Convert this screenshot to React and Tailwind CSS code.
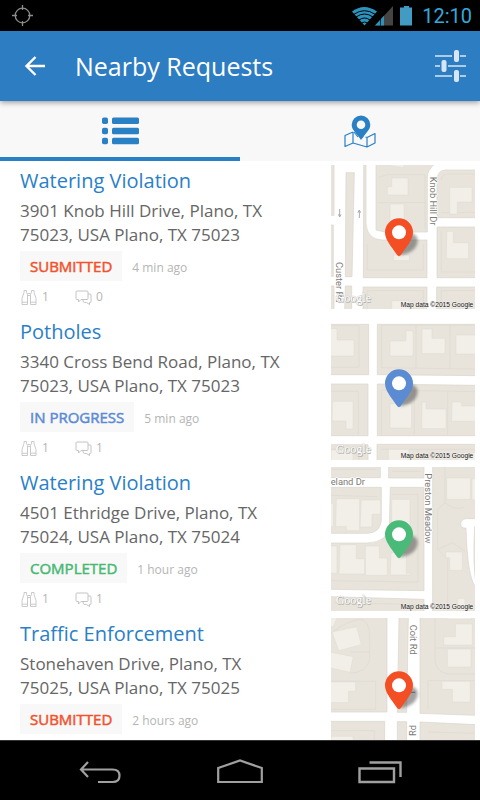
import React from "react";

const requests = [
  { id: 1, title: "Watering Violation", line1: "3901 Knob Hill Drive, Plano, TX", line2: "75023, USA Plano, TX 75023", status: "SUBMITTED", tone: "text-[#f4502a]", pin: "#f44e25", time: "4 min ago", watchers: 1, comments: 0, map: KnobHillMap },
  { id: 2, title: "Potholes", line1: "3340 Cross Bend Road, Plano, TX", line2: "75023, USA Plano, TX 75023", status: "IN PROGRESS", tone: "text-[#5b8bd6]", pin: "#5b8bd2", time: "5 min ago", watchers: 1, comments: 1, map: CrossBendMap },
  { id: 3, title: "Watering Violation", line1: "4501 Ethridge Drive, Plano, TX", line2: "75024, USA Plano, TX 75024", status: "COMPLETED", tone: "text-[#48b975]", pin: "#4aba78", time: "1 hour ago", watchers: 1, comments: 1, map: EthridgeMap },
  { id: 4, title: "Traffic Enforcement", line1: "Stonehaven Drive, Plano, TX", line2: "75025, USA Plano, TX 75025", status: "SUBMITTED", tone: "text-[#f4502a]", pin: "#f44e25", time: "2 hours ago", watchers: 1, comments: 0, map: StonehavenMap },
];

function Blocks({ d }) {
  return <path d={d} fill="#e8e4dc" stroke="#d9d5cb" strokeWidth="2" />;
}
function Lots({ d }) {
  return <path d={d} fill="none" stroke="#dfdbd2" strokeWidth="2.5" />;
}
function Houses({ d }) {
  return <path d={d} fill="#f1efe8" stroke="#dedad1" strokeWidth="1.5" />;
}
function Street({ x, y, vertical, children }) {
  return (
    <text
      transform={vertical ? `translate(${x} ${y}) rotate(90)` : `translate(${x} ${y})`}
      className="fill-[#7d7a76] font-[Roboto,sans-serif] text-[28px]"
      stroke="#fff"
      strokeWidth="4"
      paintOrder="stroke"
    >
      {children}
    </text>
  );
}

function KnobHillMap() {
  return (
    <g transform="translate(-33 -15)">
      <Blocks d="M30 12h12v154H30ZM30 195h10v154H30ZM78 38h25l-7 312H76ZM168 12h176q-22 18-22 40v164H206q-20 0-38-6ZM131 12h7v180q4 46 48 48h135v113H130ZM468 30H375q-22 2-24 28v115h117ZM351 201h117v152H351ZM30 378h12v72H30ZM76 378h19v72H74ZM129 381h192v69H129ZM350 381h118v69H350Z" />
      <Lots d="M175 52l28-8h112v84H172M315 128v80M142 252v78h168v-78M364 60q0-18 20-18h84M364 158h104M364 214v122h104M142 450v-58h168v58M364 450v-58h104" />
      <Houses d="M215 54h49v51h-62V80h13ZM210 132h42v58h-42ZM389 82h67v44h-44v36h-23ZM380 214h20v34h46v48h-67ZM220 285h48v17h-48ZM215 422h52v28h-52ZM202 12h50v11l-46-7Z" />
      <path d="M59 147v23m-4-7 4 8 4-8M118 174v-23m-4 7 4-8 4 8" fill="none" stroke="#aaa" strokeWidth="3" />
      <Street x={330} y={50} vertical>Knob Hill Dr</Street>
      <Street x={48} y={306} vertical>Custer Rd</Street>
    </g>
  );
}

function CrossBendMap() {
  return (
    <g transform="translate(-33 -12)">
      <Blocks d="M30 37h116v151H30ZM172 37h296v154l-296-3ZM30 216h114v155H30ZM172 216l296 4v151H172ZM30 398h114v60H30ZM171 397h297v61H171Z" />
      <Lots d="M33 41h84v125H33M184 40h281M184 40v127l281 4M288 40v128M390 40v130M33 238h82v129M184 234l281 5M184 234v133M283 236v131M383 238v131M33 412h84v40M184 412h281M294 412v40" />
      <Houses d="M30 50h21v34h51v48H30ZM258 56h21v76h-69V87h48ZM306 51h30v28h39v46h-69ZM408 69h60v57h-60ZM38 268h61v83H78v-24H36ZM210 275h65v73h-65ZM306 270h12v21h60v59h-73ZM396 270h29v12h43v46h-73ZM205 412h62v46h-62ZM33 414h66v44H33ZM412 422h56v36h-56Z" />
    </g>
  );
}

function EthridgeMap() {
  return (
    <g transform="translate(-33 -13)">
      <Blocks d="M30 10h151v35H30ZM206 10h106v36H206ZM30 74h154v100q-4 36-42 38H30ZM211 74h101v310L30 380V241h112q62-2 66-52ZM338 10h130v158h-30q-16 2-16 16t16 12q4 150 30 178v73H338ZM464 192h4v172q-10-60-4-172ZM30 402l282 8v40H30Z" />
      <Lots d="M33 20h139M33 98l139 4M216 95h78v263l-261-4M375 10v110l-22 20v120l30 30v157M375 120q30 24 56 14M355 260l42-20 38 26M216 26h86M42 420l258 6" />
      <Houses d="M30 122h10v70H30ZM49 108h70v96H79v-12H47ZM124 112h58v43h-26v38h-36ZM215 110h55v105h-55ZM30 250h21v82H30ZM60 246h49v42h25v46H57ZM136 250h42v36h24v52h-66ZM213 270h46v62h14v5h-62ZM380 46h71v64h-71ZM456 48h12v64h-12ZM377 268h50v55h-38v-38h-12ZM413 407h22v36h-22Z" />
      <Street x={32} y={68}>eland Dr</Street>
      <Street x={315} y={32} vertical>Preston Meadow</Street>
    </g>
  );
}

function StonehavenMap() {
  return (
    <g transform="translate(-33 -20)">
      <Blocks d="M30 18h171v284H30ZM237 18h28l-5 285h-28ZM300 18h168v294l-168-6ZM30 330h164v126H30ZM232 331h28v125h-28ZM300 332l168 8v116H300Z" />
      <Lots d="M33 66q50-40 90-42 26 8 26 50v70q-8 40-60 42M90 122h60M33 210h134v84H33M345 20v130q6 34 40 38h80M350 110h115M324 208h141M324 208v86M33 358h130v84M324 362l141 4" />
      <Houses d="M36 62l74-16 14 54-68 18ZM30 122l70 14-10 47-60-14ZM30 212h77v28H86v34H30ZM30 18h22l-12 28H30ZM406 38h51v63h-86V76h35ZM382 113h71v54h-71ZM366 210h85v62h-54v-38h-31ZM380 18h75v6h-75ZM33 375h66v60H33Z" />
      <Street x={271} y={40} vertical>Coit Rd</Street>
      <text transform="translate(289 374) rotate(-90)" className="fill-[#7d7a76] font-[Roboto,sans-serif] text-[28px]">Rd</text>
      <path d="M272 243h14" stroke="#8f8b85" strokeWidth="3" />
    </g>
  );
}

function MapThumb({ Drawing, pin, id }) {
  return (
    <svg viewBox="0 0 432 432" className="size-36 shrink-0 bg-white" role="img" aria-label="Request location">
      <defs>
        <filter id={`soft-${id}`} x="-30%" y="-30%" width="160%" height="160%">
          <feGaussianBlur stdDeviation="5" />
        </filter>
      </defs>
      <Drawing />
      <path d="M206 271q10-40 26-67 24 0 28 20 0 38-54 47Z" fill="#333" opacity=".45" filter={`url(#soft-${id})`} />
      <path fillRule="evenodd" d="M204 160a42 42 0 0 1 42 42c0 22-17 40-37 69q-5 5-10 0c-20-29-37-47-37-69a42 42 0 0 1 42-42Z" fill={pin} />
      <circle cx="204" cy="202" r="21" fill="#fff" />
      <text x="16" y="413" className="fill-[#aaa7a1] font-['Liberation_Serif',serif] text-[36px]" aria-hidden="true">Google</text>
      <text x="14" y="411" className="fill-white font-['Liberation_Serif',serif] text-[36px]" stroke="#c4c1bb" strokeWidth="2" paintOrder="stroke">Google</text>
      <text x="427" y="427" textAnchor="end" className="fill-[#111] font-['Liberation_Sans',sans-serif] text-[20px]" stroke="#f4f2ee" strokeWidth="3" paintOrder="stroke">Map data ©2015 Google</text>
    </svg>
  );
}

function Binoculars() {
  return (
    <svg viewBox="0 0 18 17" className="h-[17px] w-[18px] text-[#c4c4c4]" fill="none" stroke="currentColor" aria-hidden="true">
      <path d="M4 3.500V1.500h2.500v2l1 2v10H2V9.500ZM11.500 3.500v-2H14v2l2 6v6h-5.500v-10ZM2 13.200h5.500M10.500 13.200H16M7.500 4.500h3M7.500 6.500h3" strokeWidth=".9" />
    </svg>
  );
}

function Chat() {
  return (
    <svg viewBox="0 0 18 17" className="h-[17px] w-[18px] text-[#c4c4c4]" fill="none" stroke="currentColor" strokeLinejoin="round" aria-hidden="true">
      <path d="M3 2h10q1 0 1 1v6.500q0 1-1 1H7L4.500 13v-2.500H3q-1 0-1-1V3q0-1 1-1ZM14 5h2q1 0 1 1v6.500q0 1-1 1h-.5v2l-3-2h-2q-1.500 0-1.500-2.500" />
    </svg>
  );
}

function Request({ item }) {
  return (
    <li className="flex justify-between pb-[7px] pl-5 pr-[5px]">
      <div className="min-w-0">
        <h2 className="text-xl leading-8 text-[#2a80c8]">{item.title}</h2>
        <p className="mt-0.5 text-[17px] leading-6 text-[#666]">
          {item.line1}
          <br />
          {item.line2}
        </p>
        <div className="mt-1 flex items-center gap-2.5">
          <span className={`bg-[#f8f8f8] px-2.5 text-[15px] leading-[30px] [-webkit-text-stroke:0.5px] ${item.tone}`}>{item.status}</span>
          <span className="pt-1 text-xs leading-5 text-[#b5b5b5]">{item.time}</span>
        </div>
        <div className="mt-1.5 flex h-5 items-center text-xs leading-5 text-[#b5b5b5]">
          <span className="flex w-[54px] items-center gap-1"><Binoculars />{item.watchers}</span>
          <span className="flex items-center gap-1"><Chat />{item.comments}</span>
        </div>
      </div>
      <MapThumb Drawing={item.map} pin={item.pin} id={item.id} />
    </li>
  );
}

function StatusBar() {
  return (
    <div className="flex h-[31px] shrink-0 items-center justify-between bg-black pl-3 pr-2">
      <svg viewBox="0 0 21 21" className="size-[21px]" fill="none" stroke="#8c8c8c" strokeWidth="1.3" aria-hidden="true">
        <circle cx="10.500" cy="10.500" r="7.300" />
        <path d="M10.500 0v5M10.500 16v5M0 10.500h5M16 10.500h5" />
      </svg>
      <div className="flex items-center">
        <svg viewBox="0 0 62 20" className="mr-2.5 h-5 w-[62px]" aria-hidden="true">
          <path d="M2 5.500Q14-3.500 27 5.500L14.500 19.500Z" fill="#2d93bd" />
          <path d="M4 8.200q10.500-7 21 0M6 11q8.500-6 17 0M9 14q5.500-4 11 0M11.500 17q3-2 6 0" fill="none" stroke="#000" strokeWidth="1" />
          <path d="M43 0v19.500H25Z" fill="#444" />
          <path d="M34 9.800v9.700h-9Z" fill="#2d93bd" />
          <path d="M30.500 12v8" stroke="#000" strokeWidth=".7" />
          <path d="M54 0h5V1.500h4v18H50v-18h4Z" fill="#429bc2" />
        </svg>
        <span className="font-[Roboto,sans-serif] text-[20px] leading-6 text-[#33a9dc]">12:10</span>
      </div>
    </div>
  );
}

function Header() {
  return (
    <header className="relative z-10 flex h-[70px] shrink-0 items-center bg-[#2d7dc3] pl-6 pr-3.5 text-white shadow-[0_1px_6px_rgba(0,0,0,0.45)]">
      <button type="button" aria-label="Back" className="mr-[29px]">
        <svg viewBox="0 0 22 20" className="block h-5 w-[22px]" fill="none" stroke="currentColor" strokeWidth="2.400">
          <path d="M11.500 1 2.500 10l9 9M2.500 10H21" />
        </svg>
      </button>
      <h1 className="text-[25px] leading-8">Nearby Requests</h1>
      <button type="button" aria-label="Filter requests" className="ml-auto text-[#d8e6f4]">
        <svg viewBox="0 0 32 32" className="block size-8">
          <path d="M1 6h17M26 6h6M1 16h5M14 16h18M1 26h17M26 26h6" stroke="currentColor" strokeWidth="1.600" />
          <g fill="currentColor">
            <rect x="20" y="0" width="5" height="12" rx="2" />
            <rect x="7.500" y="10" width="5" height="12" rx="2" />
            <rect x="20" y="20" width="5" height="12" rx="2" />
          </g>
        </svg>
      </button>
    </header>
  );
}

function Tabs() {
  return (
    <div role="tablist" className="grid h-[60px] shrink-0 grid-cols-2 bg-[#f8f8f8] text-[#2a80c5]">
      <button type="button" role="tab" aria-selected="true" aria-label="List" className="flex items-center justify-center border-b-4 border-[#2a80c5] pt-1">
        <svg viewBox="0 0 37 28" className="h-7 w-[37px]" fill="currentColor">
          <rect x="0" y="0.500" width="6" height="6.500" rx="1.800" />
          <rect x="0" y="10.700" width="6" height="6.500" rx="1.800" />
          <rect x="0" y="20.800" width="6" height="6.500" rx="1.800" />
          <rect x="10" y="0.500" width="27" height="6.500" rx="1.500" />
          <rect x="10" y="10.700" width="27" height="6.500" rx="1.500" />
          <rect x="10" y="20.800" width="27" height="6.500" rx="1.500" />
        </svg>
      </button>
      <button type="button" role="tab" aria-selected="false" aria-label="Map" className="flex items-center justify-center">
        <svg viewBox="0 0 32 33" className="h-[33px] w-8">
          <path d="M9 17 1 20.500V31.500L9 28l14 4 8-4V18.500l-8 4-1.500-.5M9 17v11M23 22.500V32M10 17l4 5M18 23l3-5.500" fill="none" stroke="currentColor" strokeWidth="1.200" strokeLinejoin="round" />
          <path fillRule="evenodd" d="M17 .5a9.300 9.300 0 0 1 9.300 9.300c0 5-4 7.500-9.300 15.200-5.300-7.700-9.300-10.200-9.300-15.200A9.300 9.300 0 0 1 17 .5Zm0 5a4.300 4.300 0 1 0 0 8.600 4.300 4.300 0 0 0 0-8.600Z" fill="currentColor" />
        </svg>
      </button>
    </div>
  );
}

function NavBar() {
  return (
    <nav className="grid h-[60px] shrink-0 grid-cols-[200px_1fr_200px] items-center border-t border-[#333] bg-black text-[#a0a0a0]">
      <button type="button" aria-label="Back" className="flex justify-center pt-0.5">
        <svg viewBox="0 0 42 26" className="h-[26px] w-[42px]" fill="none" stroke="currentColor" strokeWidth="2.200">
          <path d="M9 3 2 10.500 9 18M2 10.500h31.500q7 0 7 6.200 0 6.300-7 6.300H19" />
        </svg>
      </button>
      <button type="button" aria-label="Home" className="flex justify-center pt-0.5">
        <svg viewBox="0 0 46 26" className="h-[26px] w-[46px]" fill="none" stroke="currentColor" strokeWidth="2.200">
          <path d="M1.200 9 23 1.500 44.800 9v14H1.200Z" />
        </svg>
      </button>
      <button type="button" aria-label="Recent apps" className="flex justify-center pt-0.5">
        <svg viewBox="0 0 44 26" className="h-[26px] w-11" fill="none" stroke="currentColor" strokeWidth="2.400">
          <path d="M1.500 9.500h34.500V23H1.500ZM11.500 3.500h31V18" />
        </svg>
      </button>
    </nav>
  );
}

export default function App() {
  return (
    <div className="flex h-screen flex-col overflow-hidden bg-white font-['Open_Sans',sans-serif]">
      <StatusBar />
      <Header />
      <Tabs />
      <main className="min-h-0 flex-1 overflow-hidden pt-1">
        <ul>
          {requests.map((item) => (
            <Request key={item.id} item={item} />
          ))}
        </ul>
      </main>
      <NavBar />
    </div>
  );
}
